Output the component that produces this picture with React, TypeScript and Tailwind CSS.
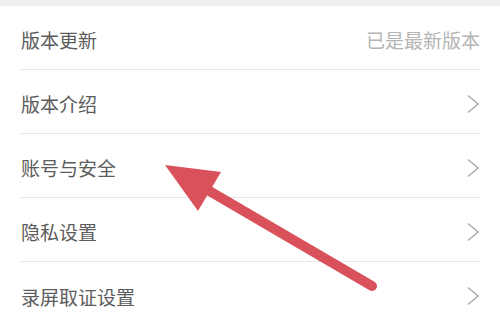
const ROWS = [
  { label: "版本更新", value: "已是最新版本" },
  { label: "版本介绍" },
  { label: "账号与安全" },
  { label: "隐私设置" },
  { label: "录屏取证设置" },
];

function Chevron() {
  return (
    <svg width="14" height="20" viewBox="0 0 14 20" fill="none">
      <path d="M2 1.5 L12 10 L2 18.5" stroke="#a8a8a8" strokeWidth="1.4" strokeLinejoin="miter" />
    </svg>
  );
}

export default function App() {
  return (
    <div
      className="relative w-[500px] h-[322px] overflow-hidden bg-white"
      style={{ fontFamily: '"Noto Sans CJK SC", "Noto Sans", sans-serif' }}
    >
      <div className="h-[6px] bg-[#efefef]" />
      <div className="flex flex-col px-[20px]">
        {ROWS.map((row, i) => (
          <div
            key={row.label}
            className={
              "flex items-center justify-between h-[64px] pt-[4px] " +
              (i < ROWS.length - 1 ? "border-b border-[#e6e6e6]" : "")
            }
          >
            <span className="pl-[1px] text-[19px] leading-none text-[#5c5c5c]">{row.label}</span>
            {row.value ? (
              <span className="text-[19px] leading-none text-[#b5b5b5]">{row.value}</span>
            ) : (
              <Chevron />
            )}
          </div>
        ))}
      </div>

      {/* annotation arrow */}
      <svg className="absolute inset-0 pointer-events-none" width="500" height="322" viewBox="0 0 500 322">
        <line x1="206" y1="189" x2="372" y2="286" stroke="#d9515a" strokeWidth="10" strokeLinecap="round" />
        <polygon points="165,165 221,172 198,211" fill="#d9515a" />
      </svg>
    </div>
  );
}
